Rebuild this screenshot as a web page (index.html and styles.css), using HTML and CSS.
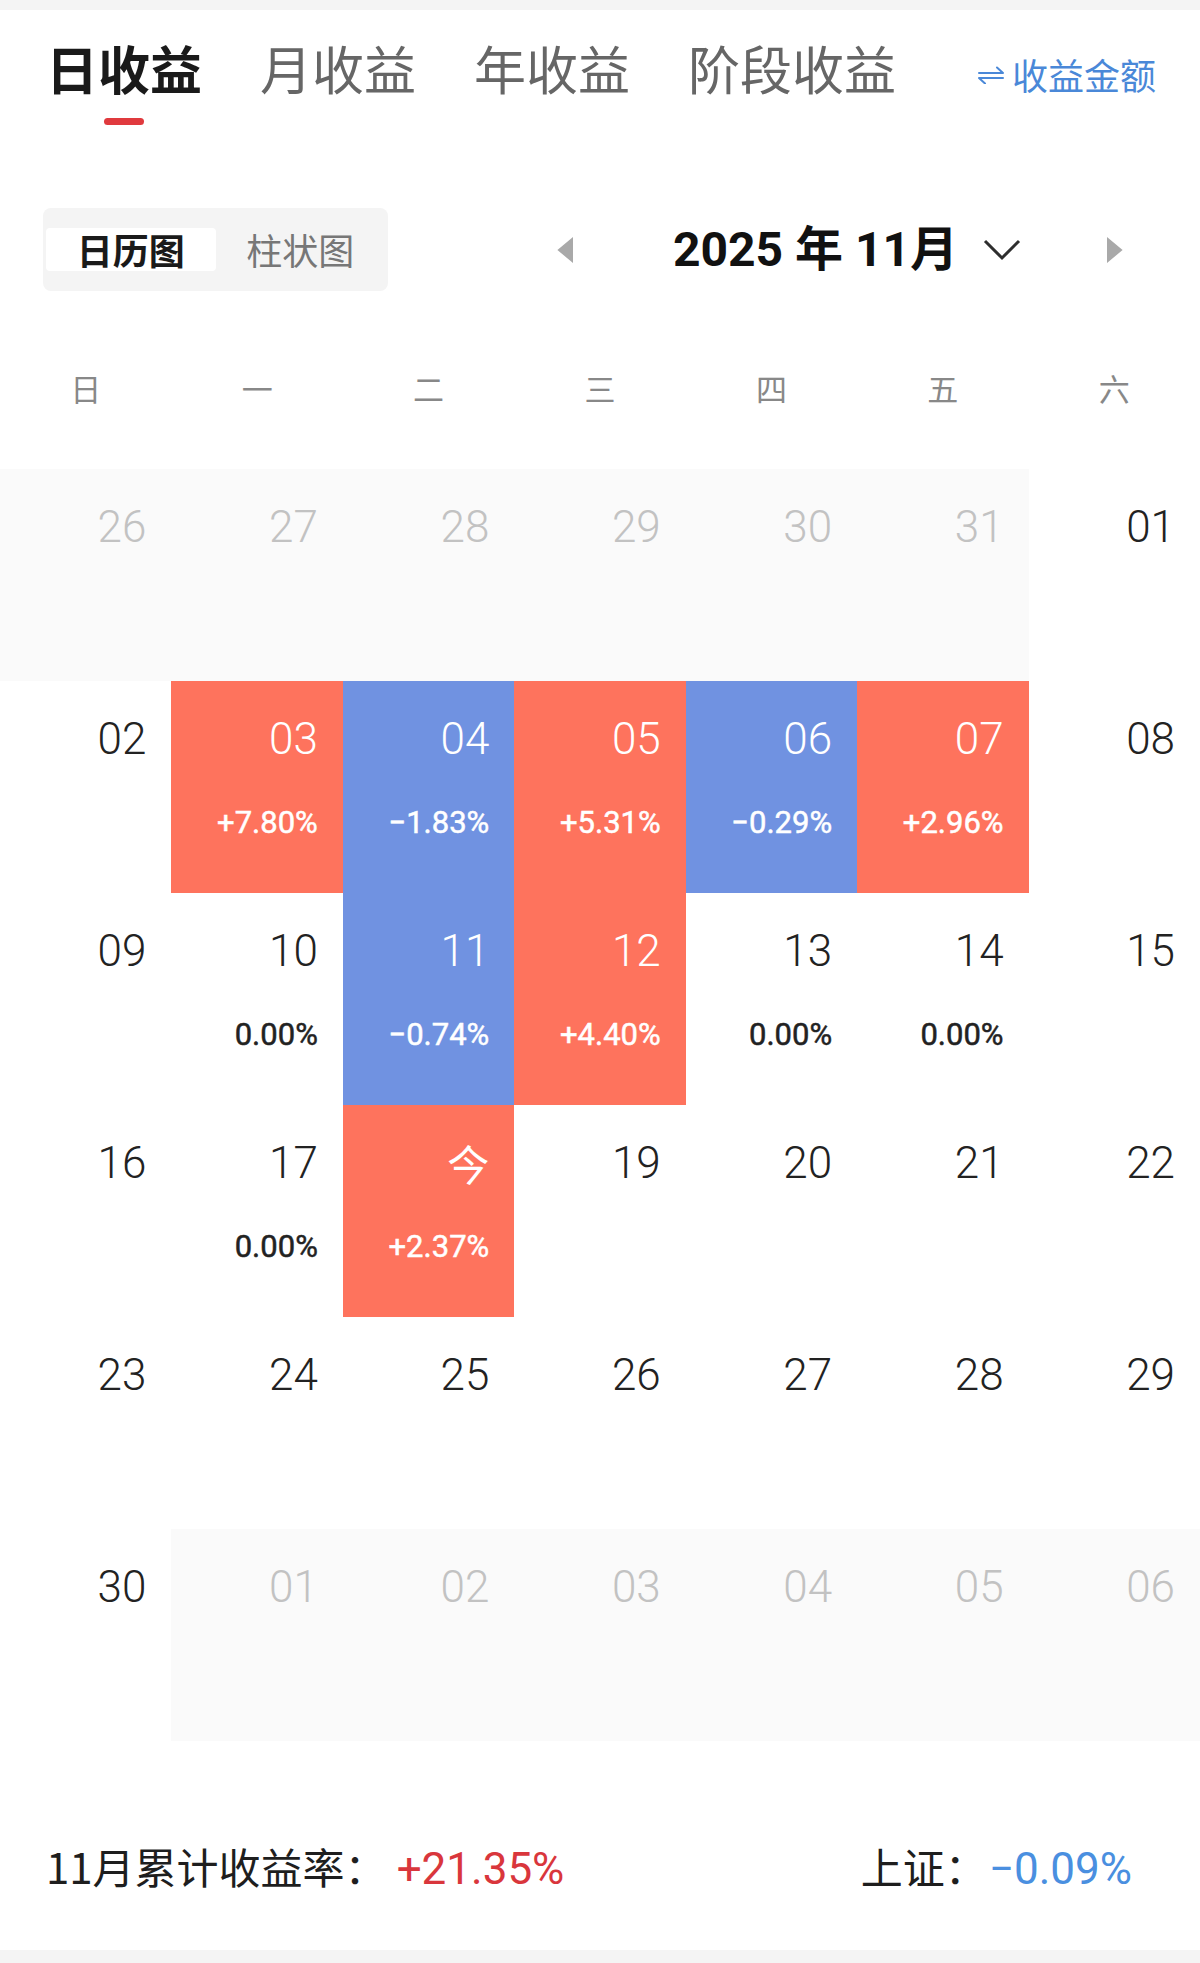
FILE: index.html
```html
<!DOCTYPE html>
<html lang="zh-CN">
<head>
<meta charset="utf-8">
<title>日收益</title>
<link rel="stylesheet" href="styles.css">
</head>
<body>
<div class="page">
  <div class="strip"></div>

  <nav class="tabs">
    <div class="tab active"><span class="tab-label">日收益</span><span class="tab-bar"></span></div>
    <div class="tab"><span class="tab-label">月收益</span></div>
    <div class="tab"><span class="tab-label">年收益</span></div>
    <div class="tab"><span class="tab-label">阶段收益</span></div>
    <div class="switch">
      <svg class="switch-icon" width="26" height="18" viewBox="0 0 26 18"><path d="M1 7H25L19 1.5M25 12H1L7 17.5" fill="none" stroke="#4a88d8" stroke-width="2" stroke-linecap="round" stroke-linejoin="round"/></svg>
      <span>收益金额</span>
    </div>
  </nav>

  <div class="toolbar">
    <div class="seg">
      <div class="seg-item on">日历图</div>
      <div class="seg-item">柱状图</div>
    </div>
    <div class="month-nav">
      <svg class="arrow" width="18" height="28" viewBox="0 0 18 28"><path d="M17 1V27L2 14.5Q1 14 2 13.5Z" fill="#a9a9a9"/></svg>
      <div class="month">
        <span class="month-text">2025 年 11月</span>
        <svg class="chev" width="38" height="22" viewBox="0 0 38 22"><path d="M2 2L19 19L36 2" fill="none" stroke="#2e2e2e" stroke-width="3"/></svg>
      </div>
      <svg class="arrow" width="18" height="28" viewBox="0 0 18 28"><path d="M1 1V27L16 14.5Q17 14 16 13.5Z" fill="#a9a9a9"/></svg>
    </div>
  </div>

  <div class="weekdays">
    <span>日</span><span>一</span><span>二</span><span>三</span><span>四</span><span>五</span><span>六</span>
  </div>

  <div class="cal">
    <div class="cell other"><span class="d">26</span></div>
    <div class="cell other"><span class="d">27</span></div>
    <div class="cell other"><span class="d">28</span></div>
    <div class="cell other"><span class="d">29</span></div>
    <div class="cell other"><span class="d">30</span></div>
    <div class="cell other"><span class="d">31</span></div>
    <div class="cell"><span class="d">01</span></div>

    <div class="cell"><span class="d">02</span></div>
    <div class="cell up"><span class="d">03</span><span class="p">+7.80%</span></div>
    <div class="cell down"><span class="d">04</span><span class="p">−1.83%</span></div>
    <div class="cell up"><span class="d">05</span><span class="p">+5.31%</span></div>
    <div class="cell down"><span class="d">06</span><span class="p">−0.29%</span></div>
    <div class="cell up"><span class="d">07</span><span class="p">+2.96%</span></div>
    <div class="cell"><span class="d">08</span></div>

    <div class="cell"><span class="d">09</span></div>
    <div class="cell"><span class="d">10</span><span class="p">0.00%</span></div>
    <div class="cell down"><span class="d">11</span><span class="p">−0.74%</span></div>
    <div class="cell up"><span class="d">12</span><span class="p">+4.40%</span></div>
    <div class="cell"><span class="d">13</span><span class="p">0.00%</span></div>
    <div class="cell"><span class="d">14</span><span class="p">0.00%</span></div>
    <div class="cell"><span class="d">15</span></div>

    <div class="cell"><span class="d">16</span></div>
    <div class="cell"><span class="d">17</span><span class="p">0.00%</span></div>
    <div class="cell up"><span class="d today">今</span><span class="p">+2.37%</span></div>
    <div class="cell"><span class="d">19</span></div>
    <div class="cell"><span class="d">20</span></div>
    <div class="cell"><span class="d">21</span></div>
    <div class="cell"><span class="d">22</span></div>

    <div class="cell"><span class="d">23</span></div>
    <div class="cell"><span class="d">24</span></div>
    <div class="cell"><span class="d">25</span></div>
    <div class="cell"><span class="d">26</span></div>
    <div class="cell"><span class="d">27</span></div>
    <div class="cell"><span class="d">28</span></div>
    <div class="cell"><span class="d">29</span></div>

    <div class="cell"><span class="d">30</span></div>
    <div class="cell other"><span class="d">01</span></div>
    <div class="cell other"><span class="d">02</span></div>
    <div class="cell other"><span class="d">03</span></div>
    <div class="cell other"><span class="d">04</span></div>
    <div class="cell other"><span class="d">05</span></div>
    <div class="cell other"><span class="d">06</span></div>
  </div>

  <div class="summary">
    <div class="sum-item"><span class="sum-label">11月累计收益率：</span><span class="sum-val red">+21.35%</span></div>
    <div class="sum-item"><span class="sum-label">上证：</span><span class="sum-val blue">−0.09%</span></div>
  </div>

  <div class="strip bottom"></div>
</div>
</body>
</html>
```

FILE: styles.css
```css
* { box-sizing: border-box; }
html, body { margin: 0; padding: 0; background: #fff; }
body {
  font-family: "Noto Sans CJK SC", sans-serif;
  color: #222;
}
.page { width: 1200px; }

.strip { height: 10px; background: #f4f4f4; }
.strip.bottom { height: 13px; }

/* tabs */
.tabs {
  display: flex;
  align-items: flex-start;
  padding: 32px 44px 0 46px;
  gap: 58px;
}
.tab {
  display: flex;
  flex-direction: column;
  align-items: center;
}
.tab-label {
  font-size: 52px;
  line-height: 52px;
  color: #666;
  white-space: nowrap;
}
.tab.active .tab-label { color: #1a1a1a; font-weight: 700; }
.tab-bar {
  width: 40px;
  height: 7px;
  border-radius: 4px;
  background: #e03a3e;
  margin-top: 24px;
}
.switch {
  margin-left: auto;
  margin-top: 14px;
  display: flex;
  align-items: center;
  gap: 8px;
  color: #4a88d8;
  font-size: 36px;
  line-height: 36px;
}
.switch-icon { display: block; margin-top: 2px; }

/* toolbar */
.toolbar {
  display: flex;
  align-items: center;
  margin-top: 83px;
  padding: 0 76px 0 43px;
}
.seg {
  width: 345px;
  height: 83px;
  background: #f4f4f4;
  border-radius: 8px;
  padding: 0 3px;
  display: flex;
  align-items: center;
}
.seg-item {
  flex: 1;
  height: 43px;
  line-height: 43px;
  text-align: center;
  font-size: 36px;
  color: #777;
  border-radius: 4px;
}
.seg-item.on { background: #fff; color: #1a1a1a; font-weight: 700; }

.month-nav {
  flex: 1;
  margin-left: 168px;
  display: flex;
  align-items: center;
  justify-content: space-between;
}
.arrow { display: block; }
.month {
  display: flex;
  align-items: center;
  gap: 25px;
  margin-left: 14px;
}
.month-text {
  font-family: Roboto, "Noto Sans CJK SC", sans-serif;
  font-weight: 700;
  font-size: 48px;
  line-height: 56px;
  color: #111;
  white-space: nowrap;
}
.chev { display: block; }

/* weekdays */
.weekdays {
  display: grid;
  grid-template-columns: repeat(7, 1fr);
  padding: 81px 0 66px;
}
.weekdays span {
  text-align: center;
  font-size: 31px;
  line-height: 31px;
  color: #888;
}

/* calendar */
.cal {
  display: grid;
  grid-template-columns: repeat(7, 1fr);
  grid-auto-rows: 212px;
}
.cell {
  display: flex;
  flex-direction: column;
  align-items: flex-end;
  padding: 36px 25px 0 0;
  font-family: Roboto, "Noto Sans CJK SC", sans-serif;
}
.cell .d {
  font-size: 44px;
  line-height: 44px;
  font-weight: 300;
  color: #222;
}
.cell .d.today {
  font-family: "Noto Sans CJK SC", sans-serif;
  font-size: 42px;
  font-weight: 400;
}
.cell .p {
  margin-top: 46px;
  font-size: 31px;
  line-height: 31px;
  font-weight: 400;
  -webkit-text-stroke: 0.5px currentColor;
  color: #222;
}
.cell.other { background: #fafafa; }
.cell.other .d { color: #c2c2c2; }
.cell.up { background: #fe735d; }
.cell.down { background: #7092e1; }
.cell.up .d, .cell.up .p, .cell.down .d, .cell.down .p { color: #fff; }

/* summary */
.summary {
  height: 209px;
  padding: 100px 68px 0 46px;
  display: flex;
  justify-content: space-between;
  align-items: baseline;
}
.sum-item { display: flex; align-items: baseline; }
.sum-label {
  font-size: 42px;
  line-height: 50px;
  color: #1e1e1e;
}
.sum-val {
  font-family: Roboto, sans-serif;
  font-size: 44px;
  line-height: 50px;
  margin-left: 10px;
}
.sum-val.red { color: #d9363c; }
.sum-val.blue { color: #4a8fe0; margin-left: 2px; }
```
